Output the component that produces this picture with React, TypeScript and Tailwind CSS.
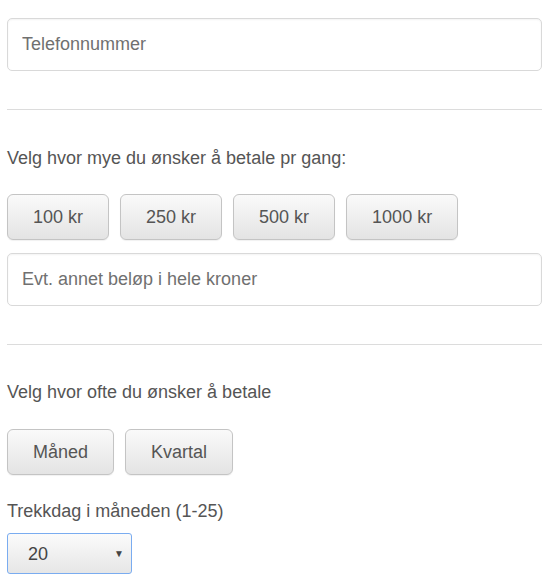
import React from "react";

const amounts = ["100 kr", "250 kr", "500 kr", "1000 kr"];
const periods = ["Måned", "Kvartal"];

function ChoiceButton({ label }: { label: string }) {
  return (
    <button
      type="button"
      className="h-[46px] px-[25px] border border-[#c4c4c4] rounded-[6px] bg-gradient-to-b from-[#fafafa] to-[#e4e4e4] text-[#555] text-[18px] shadow-[0_1px_1px_rgba(0,0,0,0.06)]"
    >
      {label}
    </button>
  );
}

function TextInput({ placeholder }: { placeholder: string }) {
  return (
    <input
      type="text"
      placeholder={placeholder}
      className="block w-full h-[53px] px-[14px] border border-[#d9d9d9] rounded-[5px] bg-white text-[18px] text-[#555] placeholder:text-[#707070] shadow-[inset_0_1px_2px_rgba(0,0,0,0.05)] outline-none"
    />
  );
}

export default function App() {
  return (
    <div className="w-[549px] min-h-[588px] bg-white px-[7px] pt-[18px] font-['Liberation_Sans',Arial,sans-serif] text-[18px] leading-[24px] text-[#555]">
      <TextInput placeholder="Telefonnummer" />

      <hr className="mt-[38px] border-0 border-t border-[#dcdcdc]" />

      <p className="mt-[36px]">Velg hvor mye du ønsker å betale pr gang:</p>
      <div className="mt-[24px] flex gap-[11px]">
        {amounts.map((a) => (
          <ChoiceButton key={a} label={a} />
        ))}
      </div>
      <div className="mt-[13px]">
        <TextInput placeholder="Evt. annet beløp i hele kroner" />
      </div>

      <hr className="mt-[38px] border-0 border-t border-[#dcdcdc]" />

      <p className="mt-[35px]">Velg hvor ofte du ønsker å betale</p>
      <div className="mt-[25px] flex gap-[11px]">
        {periods.map((p) => (
          <ChoiceButton key={p} label={p} />
        ))}
      </div>

      <p className="mt-[24px]">Trekkdag i måneden (1-25)</p>
      <div className="mt-[10px] relative w-[125px] h-[41px] border border-[#7aacf0] rounded-[3px] bg-gradient-to-b from-[#fbfbfb] to-[#e6e6e6] flex items-center">
        <span className="pl-[20px] text-[#444]">20</span>
        <span className="absolute right-[7px] top-[15px] text-[10px] leading-[10px] text-[#444]">▼</span>
      </div>
    </div>
  );
}
